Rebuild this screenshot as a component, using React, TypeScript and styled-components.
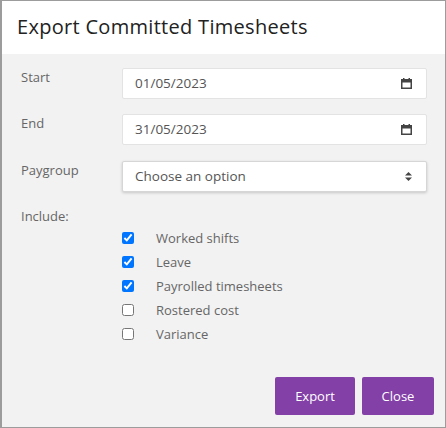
import React from "react";
import styled, { createGlobalStyle } from "styled-components";

const GlobalStyle = createGlobalStyle`
  html, body { margin: 0; padding: 0; background: #ffffff; }
  body { font-family: "Open Sans", "Noto Sans", sans-serif; }
  * { box-sizing: border-box; }
`;

const Dialog = styled.div`
  width: 446px;
  height: 428px;
  border: 1px solid #9c9c9c;
  border-left-width: 2px;
  background: #f2f2f2;
  display: flex;
  flex-direction: column;
`;

const Header = styled.div`
  height: 53px;
  flex-shrink: 0;
  background: #ffffff;
  display: flex;
  align-items: center;
  padding: 0 0 2px 15px;
  font-size: 20px;
  color: #222222;
  letter-spacing: 0.3px;
`;

const Body = styled.div`
  flex: 1;
  display: flex;
  flex-direction: column;
  padding: 14px 18px 0 19px;
`;

const FieldRow = styled.div<{ $gap?: number }>`
  display: grid;
  grid-template-columns: 101px 1fr;
  margin-bottom: ${(p) => p.$gap ?? 15}px;
`;

const Label = styled.div`
  font-size: 13px;
  color: #666666;
`;

const FakeInput = styled.div<{ $raised?: boolean }>`
  height: 31px;
  background: #ffffff;
  border: 1px solid ${(p) => (p.$raised ? "#d6d6d6" : "#e3e3e3")};
  border-radius: 2px;
  display: flex;
  align-items: center;
  justify-content: space-between;
  padding: 0 14px 1px 12px;
  font-size: 13.5px;
  color: #555555;
  box-shadow: ${(p) => (p.$raised ? "0 1px 3px rgba(0,0,0,0.18)" : "none")};
`;

const IncludeLabel = styled(Label)`
  height: 20px;
  padding-top: 1px;
`;

const CheckList = styled.div`
  display: flex;
  flex-direction: column;
  padding-left: 101px;
`;

const CheckRow = styled.label`
  height: 24px;
  display: flex;
  align-items: center;
  font-size: 13px;
  color: #666666;
`;

const Check = styled.input`
  width: 12px;
  height: 12px;
  margin: 0 22px 0 0;
  accent-color: #0075ff;
`;

const Footer = styled.div`
  margin-top: auto;
  display: flex;
  justify-content: flex-end;
  gap: 7px;
  padding: 0 11px 12px 0;
`;

const Button = styled.button<{ $w: number }>`
  width: ${(p) => p.$w}px;
  height: 38px;
  background: #8340a7;
  border: none;
  border-radius: 2px;
  color: #ffffff;
  font-family: inherit;
  font-size: 13px;
  cursor: pointer;
`;

const CalendarIcon = () => (
  <svg width="11" height="11" viewBox="0 0 11 11">
    <rect x="0.75" y="1.75" width="9.5" height="8.5" fill="none" stroke="#444" strokeWidth="1.5" />
    <rect x="0.5" y="1.5" width="10" height="3" fill="#444" />
    <rect x="2" y="0" width="1.5" height="2" fill="#444" />
    <rect x="7.5" y="0" width="1.5" height="2" fill="#444" />
  </svg>
);

const SortIcon = () => (
  <svg width="7" height="9" viewBox="0 0 7 9">
    <path d="M3.5 0 L7 3.6 H0 Z" fill="#444" />
    <path d="M3.5 9 L7 5.4 H0 Z" fill="#444" />
  </svg>
);

const items: [string, boolean][] = [
  ["Worked shifts", true],
  ["Leave", true],
  ["Payrolled timesheets", true],
  ["Rostered cost", false],
  ["Variance", false],
];

export default function App() {
  return (
    <>
      <GlobalStyle />
      <Dialog>
        <Header>Export Committed Timesheets</Header>
        <Body>
          <FieldRow>
            <Label>Start</Label>
            <FakeInput>
              <span>01/05/2023</span>
              <CalendarIcon />
            </FakeInput>
          </FieldRow>
          <FieldRow $gap={16}>
            <Label>End</Label>
            <FakeInput>
              <span>31/05/2023</span>
              <CalendarIcon />
            </FakeInput>
          </FieldRow>
          <FieldRow $gap={14}>
            <Label>Paygroup</Label>
            <FakeInput $raised>
              <span>Choose an option</span>
              <SortIcon />
            </FakeInput>
          </FieldRow>
          <IncludeLabel>Include:</IncludeLabel>
          <CheckList>
            {items.map(([text, checked]) => (
              <CheckRow key={text}>
                <Check type="checkbox" defaultChecked={checked} />
                {text}
              </CheckRow>
            ))}
          </CheckList>
        </Body>
        <Footer>
          <Button $w={80}>Export</Button>
          <Button $w={72}>Close</Button>
        </Footer>
      </Dialog>
    </>
  );
}
